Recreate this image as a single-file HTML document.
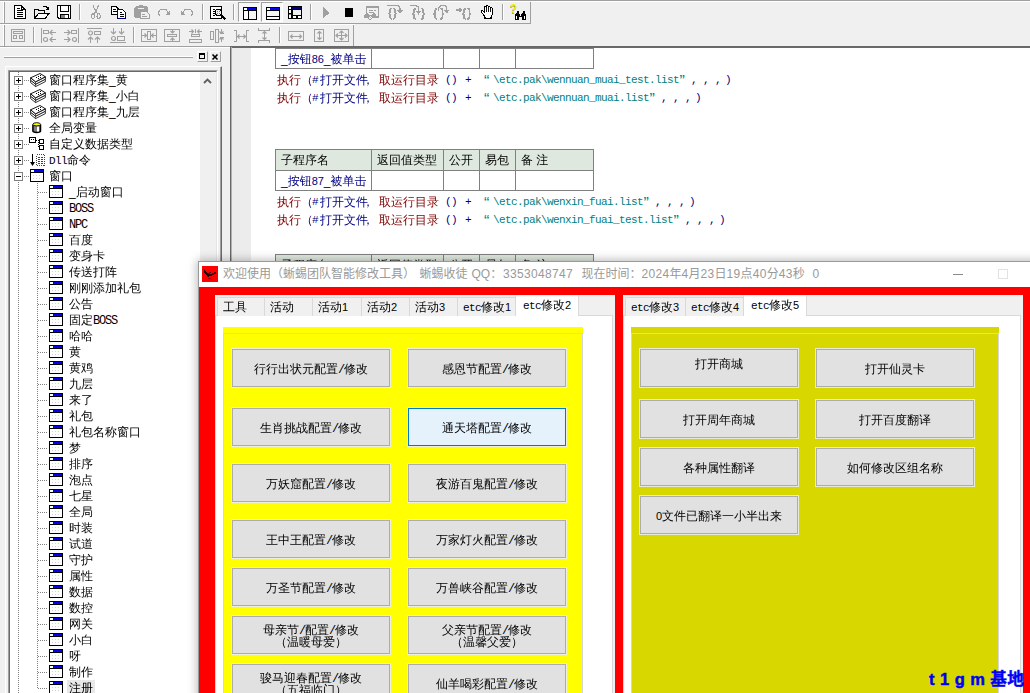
<!DOCTYPE html><html lang="zh"><head><meta charset="utf-8"><title>IDE</title><style>
*{box-sizing:border-box;margin:0;padding:0}
html,body{width:1030px;height:693px;overflow:hidden;background:#f0f0f0}
body{position:relative;font-family:"Liberation Sans","WenQuanYi Zen Hei","Noto Sans CJK SC",sans-serif;font-size:12px;color:#000}
.a{position:absolute}
svg{position:absolute;overflow:visible}
.tree{position:absolute;left:10px;top:72px;width:190px;height:621px;background:#fff;overflow:hidden}
.ti{position:absolute;height:16px;line-height:16px;font-size:12px;white-space:nowrap;letter-spacing:0}
.code{position:absolute;white-space:nowrap;font-size:12px;line-height:14px;height:14px}
.r{color:#800000}.b{color:#000080}.t{color:#008080}
.lat{font-family:"Liberation Mono","WenQuanYi Zen Hei",monospace;font-size:11px;letter-spacing:-0.6px}
.dg{font-family:"Liberation Sans",sans-serif;font-size:11px;letter-spacing:-0.1px}
.lat2{font-family:"Liberation Mono","WenQuanYi Zen Hei",monospace;font-size:12px;letter-spacing:-1.2px}
.cell{position:absolute;border:1px solid #808080;font-size:12px;line-height:21px;white-space:nowrap;overflow:hidden}
.hd{background:#dfe8df}
.btn{position:absolute;width:158px;height:38px;background:#e1e1e1;border:1px solid #adadad;box-shadow:0 0 0 1px rgba(236,236,255,0.85);font-size:12px;text-align:center;white-space:nowrap;line-height:12px}
.btn>span{position:absolute;left:0;right:0;display:block}
.tab{position:absolute;height:19px;top:297px;background:#f0f0f0;border:1px solid #d9d9d9;border-bottom:none;font-size:12px;line-height:18px;white-space:nowrap;padding-left:5px}
.tab.sel{top:295px;height:21px;background:#fff;border-color:#d9d9d9;border-top-color:#f2f2f2;line-height:19px;z-index:3;padding-left:7px}
</style></head><body>
<div class="a" style="left:0;top:0;width:1030px;height:1px;background:#a0a0a0"></div>
<div class="a" style="left:0;top:1px;width:1030px;height:1px;background:#fff"></div>
<div class="a" style="left:0;top:23px;width:531px;height:1px;background:#a0a0a0"></div>
<div class="a" style="left:530px;top:2px;width:1px;height:22px;background:#a0a0a0"></div>
<div class="a" style="left:4px;top:2px;width:1px;height:21px;background:#a0a0a0"></div>
<div class="a" style="left:3px;top:2px;width:1px;height:21px;background:#fff"></div>
<div class="a" style="left:0;top:24px;width:355px;height:1px;background:#fff"></div>
<div class="a" style="left:4px;top:25px;width:1px;height:21px;background:#a0a0a0"></div>
<div class="a" style="left:3px;top:25px;width:1px;height:21px;background:#fff"></div>
<div class="a" style="left:353px;top:25px;width:1px;height:22px;background:#a0a0a0"></div>
<div class="a" style="left:0;top:46px;width:231px;height:1px;background:#a0a0a0"></div>
<div class="a" style="left:0;top:47px;width:231px;height:1px;background:#fff"></div>
<div class="a" style="left:79px;top:4px;width:1px;height:16px;background:#a0a0a0"></div>
<div class="a" style="left:80px;top:4px;width:1px;height:16px;background:#fff"></div>
<div class="a" style="left:202px;top:4px;width:1px;height:16px;background:#a0a0a0"></div>
<div class="a" style="left:203px;top:4px;width:1px;height:16px;background:#fff"></div>
<div class="a" style="left:233px;top:4px;width:1px;height:16px;background:#a0a0a0"></div>
<div class="a" style="left:234px;top:4px;width:1px;height:16px;background:#fff"></div>
<div class="a" style="left:310px;top:4px;width:1px;height:16px;background:#a0a0a0"></div>
<div class="a" style="left:311px;top:4px;width:1px;height:16px;background:#fff"></div>
<div class="a" style="left:502px;top:4px;width:1px;height:16px;background:#a0a0a0"></div>
<div class="a" style="left:503px;top:4px;width:1px;height:16px;background:#fff"></div>
<div class="a" style="left:33px;top:27px;width:1px;height:16px;background:#a0a0a0"></div>
<div class="a" style="left:34px;top:27px;width:1px;height:16px;background:#fff"></div>
<div class="a" style="left:133px;top:27px;width:1px;height:16px;background:#a0a0a0"></div>
<div class="a" style="left:134px;top:27px;width:1px;height:16px;background:#fff"></div>
<div class="a" style="left:279px;top:27px;width:1px;height:16px;background:#a0a0a0"></div>
<div class="a" style="left:280px;top:27px;width:1px;height:16px;background:#fff"></div>
<svg style="left:14px;top:5px" width="13" height="14" viewBox="0 0 13 14" shape-rendering="crispEdges" shape-rendering="geometricPrecision"><path d="M0.6 0.6H7.4L11.6 4.8V13.4H0.6Z" fill="#fff" stroke="#000" stroke-width="1.25"/><path d="M7.4 0.6V4.8H11.6" fill="none" stroke="#000" stroke-width="1.1"/><path d="M3 3.5H6M3 5.5H9M3 7.5H9M3 9.5H9M3 11.5H9" stroke="#000" stroke-width="1" shape-rendering="crispEdges"/></svg>
<svg style="left:34px;top:5px" width="16" height="14" viewBox="0 0 16 14" shape-rendering="crispEdges" shape-rendering="geometricPrecision"><path d="M0.6 13.4V4.6H4L5 5.8H10.4V8" fill="none" stroke="#000" stroke-width="1.25"/><path d="M0.8 13.4L4.6 8.2H15.2L11.2 13.4Z" fill="#fff" stroke="#000" stroke-width="1.25"/><path d="M8.5 2.4C10 0.9 12.6 1.2 13.8 3.4" fill="none" stroke="#000" stroke-width="1"/><path d="M14.8 2V4.8H12Z" fill="#000"/></svg>
<svg style="left:57px;top:5px" width="15" height="14" viewBox="0 0 15 14" shape-rendering="crispEdges" shape-rendering="geometricPrecision"><path d="M0.6 0.6H13.4V13.4H1.8L0.6 12.2Z" fill="#fff" stroke="#000" stroke-width="1.25"/><path d="M3.5 0.6V6.5H11.5V0.6" fill="none" stroke="#000" stroke-width="1.1"/><path d="M3.5 13.4V9.5H11.5V13.4" fill="none" stroke="#000" stroke-width="1.1"/><rect x="4.2" y="10.2" width="3.4" height="2.8" fill="#808080"/><rect x="12" y="1.6" width="0.9" height="0.9" fill="#fff"/></svg>
<svg style="left:91px;top:5px" width="10" height="14" viewBox="0 0 10 14" shape-rendering="crispEdges" shape-rendering="geometricPrecision"><path d="M2.3 0L3 3L6.6 9M7.3 0L6.6 3L3 9" stroke="#a0a0a0" stroke-width="1.1" fill="none"/><ellipse cx="2" cy="11.2" rx="1.6" ry="2.4" fill="none" stroke="#a0a0a0" stroke-width="1.1"/><ellipse cx="7.6" cy="11.2" rx="1.6" ry="2.4" fill="none" stroke="#a0a0a0" stroke-width="1.1"/></svg>
<svg style="left:111px;top:6px" width="16" height="13" viewBox="0 0 16 13" shape-rendering="crispEdges" shape-rendering="geometricPrecision"><path d="M0.6 0.6H5.4L8 3.2V8.6H0.6Z" fill="#fff" stroke="#000" stroke-width="1.25"/><path d="M2.2 3.5H4.8M2.2 5.5H6.5" stroke="#000" shape-rendering="crispEdges"/><path d="M6.7 3.6H11.6L14.6 6.6V12.4H6.7Z" fill="#fff" stroke="#000080" stroke-width="1.35"/><path d="M8.5 6.5H11M8.5 8.5H13M8.5 10.5H13" stroke="#000" shape-rendering="crispEdges"/></svg>
<svg style="left:134px;top:5px" width="16" height="15" viewBox="0 0 16 15" shape-rendering="crispEdges" shape-rendering="geometricPrecision"><rect x="0.3" y="1.2" width="13.6" height="12" rx="2.2" fill="#a0a0a0"/><rect x="4.6" y="0" width="5" height="2.4" rx="1" fill="#a0a0a0"/><rect x="4.2" y="3.1" width="6.2" height="1" fill="#f0f0f0"/><path d="M6.6 6.8H13L15.4 9.2V13.8H6.6Z" fill="#f0f0f0" stroke="#a0a0a0" stroke-width="1.1"/><path d="M8.4 9.5H11M8.4 11.5H13.4" stroke="#a0a0a0" shape-rendering="crispEdges"/></svg>
<svg style="left:158px;top:8px" width="13" height="9" viewBox="0 0 13 9" shape-rendering="crispEdges" shape-rendering="geometricPrecision"><path d="M2.2 7.8Q0.2 6.4 0.7 4Q1.6 1.2 4.6 1.2H6.4Q8.2 1.4 9.4 3.4L10.2 4.6" fill="none" stroke="#a0a0a0" stroke-width="1.3"/><path d="M12.3 1.8V6.9H7.2Z" fill="#a0a0a0"/></svg>
<svg style="left:180px;top:8px" width="13" height="9" viewBox="0 0 13 9" shape-rendering="crispEdges" shape-rendering="geometricPrecision"><path d="M10.8 7.8Q12.8 6.4 12.3 4Q11.4 1.2 8.4 1.2H6.6Q4.8 1.4 3.6 3.4L2.8 4.6" fill="none" stroke="#a0a0a0" stroke-width="1.3"/><path d="M0.7 1.8V6.9H5.8Z" fill="#a0a0a0"/></svg>
<svg style="left:210px;top:6px" width="16" height="14" viewBox="0 0 16 14" shape-rendering="crispEdges" shape-rendering="geometricPrecision"><rect x="0.6" y="0.6" width="10.6" height="11.6" fill="#fff" stroke="#000" stroke-width="1.25"/><path d="M2.5 3.5H5M2.5 5.5H5M2.5 7.5H5M2.5 9.5H5" stroke="#000" shape-rendering="crispEdges"/><circle cx="8.4" cy="6.4" r="3.2" fill="#f0f0f0" stroke="#000" stroke-width="1"/><path d="M7.2 5.5H8.2M9.2 5.5H10M7.2 7.5H8.2M9.2 7.5H10" stroke="#808080" shape-rendering="crispEdges"/><path d="M10.8 9L15 13.3" stroke="#000" stroke-width="2"/></svg>
<div class="a" style="left:238px;top:2px;width:22px;height:20px;background:#f8f8f8;border-left:1px solid #a0a0a0;border-top:1px solid #a0a0a0;border-right:1px solid #fff;border-bottom:1px solid #fff"></div>
<div class="a" style="left:261px;top:2px;width:22px;height:20px;background:#f8f8f8;border-left:1px solid #a0a0a0;border-top:1px solid #a0a0a0;border-right:1px solid #fff;border-bottom:1px solid #fff"></div>
<svg style="left:243px;top:7px" width="14" height="13" viewBox="0 0 14 13" shape-rendering="crispEdges" ><rect x="0.5" y="0.5" width="13" height="12" fill="#fff" stroke="#000"/><rect x="4" y="1" width="9" height="2" fill="#0000ff"/><path d="M1 3.5H13M5.5 4V12" stroke="#000"/><rect x="6" y="4" width="7" height="8" fill="#f6f6f6"/></svg>
<svg style="left:266px;top:7px" width="14" height="13" viewBox="0 0 14 13" shape-rendering="crispEdges" ><rect x="0.5" y="0.5" width="13" height="12" fill="#fff" stroke="#000"/><rect x="4" y="1" width="9" height="2" fill="#0000ff"/><path d="M1 3.5H13M1 9.5H13" stroke="#000"/><rect x="1" y="4" width="12" height="5" fill="#f6f6f6"/></svg>
<svg style="left:288px;top:6px" width="14" height="13" viewBox="0 0 14 13" shape-rendering="crispEdges" ><rect x="0" y="0" width="14" height="13" fill="#000"/><rect x="1" y="1" width="2" height="2" fill="#fff"/><rect x="4" y="1" width="9" height="2" fill="#000080"/><rect x="1" y="4" width="2" height="3" fill="#fff"/><rect x="1" y="9" width="2" height="3" fill="#fff"/><path d="M1 8.5H3" stroke="#808080"/><rect x="5" y="4" width="8" height="5" fill="#f0f0f0"/><rect x="5" y="10" width="3" height="2" fill="#fff"/><rect x="10" y="10" width="3" height="2" fill="#fff"/></svg>
<svg style="left:323px;top:7px" width="7" height="12" viewBox="0 0 7 12" shape-rendering="crispEdges" shape-rendering="geometricPrecision"><path d="M0 0L6.5 5.8L0 11.5Z" fill="#a0a0a0"/></svg>
<svg style="left:345px;top:8px" width="8" height="9" viewBox="0 0 8 9" shape-rendering="crispEdges" ><rect x="0" y="0" width="8" height="9" fill="#000"/></svg>
<svg style="left:364px;top:6px" width="16" height="15" viewBox="0 0 16 15" shape-rendering="crispEdges" shape-rendering="geometricPrecision"><rect x="2.6" y="0.6" width="11.8" height="10.4" fill="#f0f0f0" stroke="#a0a0a0" stroke-width="1.2"/><rect x="2" y="0" width="13" height="2.4" fill="#a0a0a0"/><path d="M5 4.5H9M10 4.5H12M5 6.5H10" stroke="#a0a0a0" shape-rendering="crispEdges"/><path d="M0.2 9.6Q0.2 7.4 2.2 7.4H3.8L5.4 9H7.4L9 7.4H10.4Q12.2 7.4 12.2 9.6V11.6H9.2L6.3 14.4L3.4 11.6H0.2Z" fill="#a0a0a0"/><path d="M6.3 10L8.1 11.8L6.3 13.6L4.5 11.8Z" fill="#f0f0f0"/><path d="M5.6 11.8H7" stroke="#a0a0a0" stroke-width="0.7"/></svg>
<svg style="left:387px;top:5px" width="16" height="14" viewBox="0 0 16 14" shape-rendering="crispEdges" shape-rendering="geometricPrecision"><path d="M5 3.4Q3 3.4 3 5.2V7.0Q3 8.6 1 8.6Q3 8.6 3 10.2V12.0Q3 13.8 5 13.8 M6 3.4Q8 3.4 8 5.2V7.0Q8 8.6 10 8.6Q8 8.6 8 10.2V12.0Q8 13.8 6 13.8" fill="none" stroke="#a0a0a0" stroke-width="1.6"/><path d="M0 0.7H10Q13 0.7 13 3.5V6" fill="none" stroke="#a0a0a0" stroke-width="1.2"/><path d="M10.4 5.4H15.6L13 8.6Z" fill="#a0a0a0"/></svg>
<svg style="left:410px;top:5px" width="16" height="14" viewBox="0 0 16 14" shape-rendering="crispEdges" shape-rendering="geometricPrecision"><path d="M6 3.6Q4 3.6 4 5.4V7.200000000000001Q4 8.8 2 8.8Q4 8.8 4 10.4V12.2Q4 14.0 6 14.0 M11.2 3.6Q13.2 3.6 13.2 5.4V7.200000000000001Q13.2 8.8 15.2 8.8Q13.2 8.8 13.2 10.4V12.2Q13.2 14.0 11.2 14.0" fill="none" stroke="#a0a0a0" stroke-width="1.6"/><path d="M0 0.7H5.5Q8.5 0.7 8.5 3.5V7" fill="none" stroke="#a0a0a0" stroke-width="1.2"/><path d="M5.9 6.2H11.1L8.5 9.6Z" fill="#a0a0a0"/></svg>
<svg style="left:433px;top:5px" width="16" height="14" viewBox="0 0 16 14" shape-rendering="crispEdges" shape-rendering="geometricPrecision"><path d="M4.2 3.6Q2.2 3.6 2.2 5.4V7.200000000000001Q2.2 8.8 0.2 8.8Q2.2 8.8 2.2 10.4V12.2Q2.2 14.0 4.2 14.0 M7.4 3.6Q9.4 3.6 9.4 5.4V7.200000000000001Q9.4 8.8 11.4 8.8Q9.4 8.8 9.4 10.4V12.2Q9.4 14.0 7.4 14.0" fill="none" stroke="#a0a0a0" stroke-width="1.6"/><path d="M5.8 6V3.5Q5.8 0.7 8.6 0.7H10.9Q13.7 0.7 13.7 3.5V6" fill="none" stroke="#a0a0a0" stroke-width="1.2"/><path d="M11.1 5.4H16.3L13.7 8.6Z" fill="#a0a0a0"/></svg>
<svg style="left:456px;top:5px" width="16" height="14" viewBox="0 0 16 14" shape-rendering="crispEdges" shape-rendering="geometricPrecision"><path d="M10 3.6Q8 3.6 8 5.4V7.200000000000001Q8 8.8 6 8.8Q8 8.8 8 10.4V12.2Q8 14.0 10 14.0 M11.4 3.6Q13.4 3.6 13.4 5.4V7.200000000000001Q13.4 8.8 15.4 8.8Q13.4 8.8 13.4 10.4V12.2Q13.4 14.0 11.4 14.0" fill="none" stroke="#a0a0a0" stroke-width="1.6"/><path d="M0 5H5" fill="none" stroke="#a0a0a0" stroke-width="1.2"/><path d="M3.2 2.4L6.4 5L3.2 7.6Z" fill="#a0a0a0"/></svg>
<svg style="left:480px;top:5px" width="14" height="15" viewBox="0 0 14 15" shape-rendering="crispEdges" shape-rendering="geometricPrecision"><path d="M3.5 9.5L1.5 7.5Q0.5 6.5 1.5 6Q2.5 5.5 3.5 6.5L4.5 7.5V2.5Q4.5 1.5 5.5 1.5Q6.3 1.5 6.3 2.5V1.5Q6.3 0.5 7.3 0.5Q8.2 0.5 8.2 1.5V2Q8.2 1.2 9.2 1.2Q10.2 1.2 10.2 2.2V3.5Q10.2 2.8 11.2 2.8Q12.2 2.8 12.2 3.8V9Q12.2 11 11 12.5V13.5H5V12.5Z" fill="#fff" stroke="#000" stroke-width="1.05"/><path d="M6.3 2.5V6.5M8.2 2V6.5M10.2 3.5V6.5" stroke="#000" stroke-width="0.9"/></svg>
<div class="a" style="left:510px;top:3px;font:bold 12px 'Liberation Sans',sans-serif;color:#f4f400;line-height:13px;text-shadow:-0.5px 0.5px 0 #9a9a60">?</div>
<svg style="left:515px;top:11px" width="11" height="9" viewBox="0 0 11 9" shape-rendering="crispEdges" shape-rendering="geometricPrecision"><path d="M0 9V4L1.5 2V0H3.5V2L4.6 3.5H6.4L7.5 2V0H9.5V2L11 4V9H6.8V5.5H4.2V9Z" fill="#000"/><rect x="1.2" y="5" width="1" height="2.6" fill="#fff"/><rect x="8.8" y="5" width="1" height="2.6" fill="#fff"/><rect x="5" y="4.2" width="1" height="1" fill="#fff"/></svg>
<svg style="left:11px;top:29px" width="14" height="13" viewBox="0 0 14 13" shape-rendering="crispEdges" ><g fill="none" stroke="#a0a0a0" stroke-width="1"><rect x="0.5" y="0.5" width="13" height="12"/><rect x="2.5" y="2.5" width="9" height="2"/><rect x="2.5" y="6.5" width="3" height="3"/><rect x="8.5" y="6.5" width="3" height="3"/></g></svg>
<svg style="left:41px;top:28px" width="16" height="15" viewBox="0 0 16 15" shape-rendering="crispEdges" ><g fill="none" stroke="#a0a0a0" stroke-width="1"><path d="M0.5 0V15"/><rect x="2.5" y="2.5" width="5" height="3"/><circle cx="4.5" cy="11.5" r="2" shape-rendering="geometricPrecision" stroke-width="1.2"/><path d="M9 4.5H15M9 11.5H15"/><path d="M11.5 2L9 4.5L11.5 7M11.5 9L9 11.5L11.5 14" shape-rendering="geometricPrecision" stroke-width="1.2"/></g></svg>
<svg style="left:64px;top:28px" width="16" height="15" viewBox="0 0 16 15" shape-rendering="crispEdges" ><g fill="none" stroke="#a0a0a0" stroke-width="1"><path d="M14.5 0V15"/><rect x="7.5" y="2.5" width="5" height="3"/><circle cx="10.5" cy="11.5" r="2" shape-rendering="geometricPrecision" stroke-width="1.2"/><path d="M0 4.5H6M0 11.5H6"/><path d="M3.5 2L6 4.5L3.5 7M3.5 9L6 11.5L3.5 14" shape-rendering="geometricPrecision" stroke-width="1.2"/></g></svg>
<svg style="left:87px;top:28px" width="16" height="15" viewBox="0 0 16 15" shape-rendering="crispEdges" ><g fill="none" stroke="#a0a0a0" stroke-width="1"><path d="M0 0.5H15"/><circle cx="3.5" cy="5" r="2" shape-rendering="geometricPrecision" stroke-width="1.2"/><rect x="7.5" y="3.5" width="6" height="3"/><path d="M3.5 9V15M10.5 9V15"/><path d="M1 11.5L3.5 9L6 11.5M8 11.5L10.5 9L13 11.5" shape-rendering="geometricPrecision" stroke-width="1.2"/></g></svg>
<svg style="left:110px;top:28px" width="16" height="15" viewBox="0 0 16 15" shape-rendering="crispEdges" ><g fill="none" stroke="#a0a0a0" stroke-width="1"><path d="M0 14.5H16"/><circle cx="3.5" cy="10.5" r="2" shape-rendering="geometricPrecision" stroke-width="1.2"/><rect x="7.5" y="8.5" width="7" height="4"/><path d="M3.5 0V6M11.5 0V6"/><path d="M1 3.5L3.5 6L6 3.5M9 3.5L11.5 6L14 3.5" shape-rendering="geometricPrecision" stroke-width="1.2"/></g></svg>
<svg style="left:141px;top:29px" width="16" height="13" viewBox="0 0 16 13" shape-rendering="crispEdges" ><g fill="none" stroke="#a0a0a0" stroke-width="1"><rect x="0.5" y="0.5" width="15" height="12"/><rect x="6.5" y="2.5" width="3" height="8"/><path d="M1 6.5H5M11 6.5H15"/><path d="M3.5 4.5L5.5 6.5L3.5 8.5M12.5 4.5L10.5 6.5L12.5 8.5" shape-rendering="geometricPrecision" stroke-width="1.2"/></g></svg>
<svg style="left:164px;top:29px" width="16" height="13" viewBox="0 0 16 13" shape-rendering="crispEdges" ><g fill="none" stroke="#a0a0a0" stroke-width="1"><rect x="0.5" y="0.5" width="15" height="12"/><rect x="3.5" y="5.5" width="9" height="2"/><path d="M8.5 1V4M8.5 9V12"/><path d="M6.5 2L8.5 4L10.5 2M6.5 11L8.5 9L10.5 11" shape-rendering="geometricPrecision" stroke-width="1.2"/></g></svg>
<svg style="left:189px;top:29px" width="14" height="14" viewBox="0 0 14 14" shape-rendering="crispEdges" ><g fill="none" stroke="#a0a0a0" stroke-width="1"><path d="M0 2.5H4M9 2.5H13"/><path d="M2.5 0.5L4.5 2.5L2.5 4.5M10.5 0.5L8.5 2.5L10.5 4.5" shape-rendering="geometricPrecision" stroke-width="1.2"/><path d="M6.5 0V4"/><rect x="2.5" y="5.5" width="8" height="2"/><rect x="0.5" y="10.5" width="12" height="3"/></g></svg>
<svg style="left:210px;top:29px" width="15" height="14" viewBox="0 0 15 14" shape-rendering="crispEdges" ><g fill="none" stroke="#a0a0a0" stroke-width="1"><rect x="0.5" y="2.5" width="3" height="8"/><rect x="5.5" y="0.5" width="3" height="13"/><path d="M11.5 0V5M11.5 8V13M9.5 4.5H14M9.5 8.5H14"/><path d="M9.5 2.5L11.5 4.5L13.5 2.5M9.5 10.5L11.5 8.5L13.5 10.5" shape-rendering="geometricPrecision" stroke-width="1.2"/></g></svg>
<svg style="left:234px;top:30px" width="16" height="12" viewBox="0 0 16 12" shape-rendering="crispEdges" ><g fill="none" stroke="#a0a0a0" stroke-width="1"><path d="M0 0.5H2.5V11.5H0M15 0.5H12.5V11.5H15M3.5 6.5H11.5"/><path d="M5.5 4.5L3.5 6.5L5.5 8.5M9.5 4.5L11.5 6.5L9.5 8.5" shape-rendering="geometricPrecision" stroke-width="1.2"/></g></svg>
<svg style="left:258px;top:28px" width="13" height="15" viewBox="0 0 13 15" shape-rendering="crispEdges" ><g fill="none" stroke="#a0a0a0" stroke-width="1"><path d="M0.5 0V2.5H11.5V0M0.5 15V12.5H11.5V15M6.5 3.5V11.5"/><path d="M4.5 5.5L6.5 3.5L8.5 5.5M4.5 9.5L6.5 11.5L8.5 9.5" shape-rendering="geometricPrecision" stroke-width="1.2"/></g></svg>
<svg style="left:288px;top:31px" width="16" height="10" viewBox="0 0 16 10" shape-rendering="crispEdges" ><g fill="none" stroke="#a0a0a0" stroke-width="1"><rect x="0.5" y="0.5" width="15" height="9"/><path d="M2.5 5.5H13.5"/><path d="M4.5 3.5L2.5 5.5L4.5 7.5M11.5 3.5L13.5 5.5L11.5 7.5" shape-rendering="geometricPrecision" stroke-width="1.2"/></g></svg>
<svg style="left:314px;top:29px" width="10" height="13" viewBox="0 0 10 13" shape-rendering="crispEdges" ><g fill="none" stroke="#a0a0a0" stroke-width="1"><rect x="0.5" y="0.5" width="9" height="12"/><path d="M5.5 2.5V10.5"/><path d="M3.5 4.5L5.5 2.5L7.5 4.5M3.5 8.5L5.5 10.5L7.5 8.5" shape-rendering="geometricPrecision" stroke-width="1.2"/></g></svg>
<svg style="left:334px;top:29px" width="15" height="13" viewBox="0 0 15 13" shape-rendering="crispEdges" ><g fill="none" stroke="#a0a0a0" stroke-width="1"><rect x="0.5" y="0.5" width="14" height="12"/><path d="M2 6.5H13M7.5 2V11"/><path d="M5.5 4L7.5 2L9.5 4M5.5 9L7.5 11L9.5 9M4 4.5L2 6.5L4 8.5M11 4.5L13 6.5L11 8.5" shape-rendering="geometricPrecision" stroke-width="1.2"/></g></svg>
<div class="a" style="left:4px;top:56px;width:189px;height:1px;background:#fff"></div>
<div class="a" style="left:4px;top:57px;width:189px;height:1px;background:#a0a0a0"></div>
<div class="a" style="left:197px;top:51px;width:11px;height:11px;background:#f0f0f0;border-right:1px solid #a0a0a0;border-bottom:1px solid #a0a0a0;border-top:1px solid #fff;border-left:1px solid #fff"></div>
<div class="a" style="left:210px;top:51px;width:11px;height:11px;background:#f0f0f0;border-right:1px solid #a0a0a0;border-bottom:1px solid #a0a0a0;border-top:1px solid #fff;border-left:1px solid #fff"></div>
<svg style="left:199px;top:53px" width="7" height="7" viewBox="0 0 7 7" shape-rendering="crispEdges" ><rect x="0.5" y="1" width="5" height="4.5" fill="none" stroke="#000" stroke-width="1"/><rect x="0" y="0" width="6" height="2" fill="#000"/></svg>
<svg style="left:212px;top:54px" width="7" height="6" viewBox="0 0 7 6" shape-rendering="crispEdges" ><path d="M0.5 0.5L5.5 5.5M5.5 0.5L0.5 5.5" stroke="#000" stroke-width="1.6" shape-rendering="auto"/></svg>
<div class="a" style="left:5px;top:66px;width:217px;height:640px;border-left:1px solid #fff;border-top:1px solid #fff;border-right:1px solid #696969"></div>
<div class="a" style="left:6px;top:67px;width:215px;height:640px;border-right:1px solid #a0a0a0"></div>
<div class="a" style="left:8px;top:70px;width:210px;height:640px;border-left:1px solid #a0a0a0;border-top:1px solid #a0a0a0;border-right:1px solid #fff"></div>
<div class="a" style="left:9px;top:71px;width:208px;height:640px;border-left:1px solid #696969;border-top:1px solid #696969;border-right:1px solid #e3e3e3;background:#fff"></div>
<div class="a" style="left:200px;top:72px;width:16px;height:640px;background:#f0f0f0"></div>
<svg style="left:203px;top:78px" width="9" height="6" viewBox="0 0 9 6" shape-rendering="crispEdges" ><path d="M1 5L4.5 1.5L8 5" fill="none" stroke="#606060" stroke-width="1.8" shape-rendering="auto"/></svg>
<div class="a" style="left:223px;top:48px;width:7px;height:660px;background:#f0f0f0"></div>
<div class="tree">
<div class="a" style="left:8px;top:0px;width:1px;height:640px;background:repeating-linear-gradient(180deg,#808080 0 1px,transparent 1px 2px)"></div>
<div class="a" style="left:4px;top:4px;width:9px;height:9px;border:1px solid #808080;background:#fff"></div>
<div class="a" style="left:6px;top:8px;width:5px;height:1px;background:#000"></div>
<div class="a" style="left:8px;top:6px;width:1px;height:5px;background:#000"></div>
<div class="a" style="left:14px;top:8px;width:6px;height:1px;background:repeating-linear-gradient(90deg,#808080 0 1px,transparent 1px 2px)"></div>
<svg style="left:20px;top:1px" width="16" height="14" viewBox="0 0 16 14" shape-rendering="geometricPrecision"><path d="M0.6 9.6L5.6 13.6L15.4 8.6V6.2L5.6 11.2L0.6 7.2Z" fill="#fff" stroke="#000" stroke-width="0.8"/><path d="M0.6 7.2L5.6 11.2L15.4 6.2V3.8L5.6 8.8L0.6 4.8Z" fill="#fff" stroke="#000" stroke-width="0.8"/><path d="M0.6 4.8L10 0.5L15.4 3.8L5.6 8.8Z" fill="#fff" stroke="#000" stroke-width="0.9"/><path d="M5.6 8.8V13.6" stroke="#000" stroke-width="0.6"/><rect x="6" y="4" width="1" height="1" fill="#000"/><rect x="8" y="3" width="1" height="1" fill="#000"/><rect x="10" y="2" width="1" height="1" fill="#000"/><rect x="8" y="5" width="1" height="1" fill="#000"/><rect x="10" y="4" width="1" height="1" fill="#000"/></svg>
<div class="ti" style="left:39px;top:0px">窗口程序集_黄</div>
<div class="a" style="left:4px;top:20px;width:9px;height:9px;border:1px solid #808080;background:#fff"></div>
<div class="a" style="left:6px;top:24px;width:5px;height:1px;background:#000"></div>
<div class="a" style="left:8px;top:22px;width:1px;height:5px;background:#000"></div>
<div class="a" style="left:14px;top:24px;width:6px;height:1px;background:repeating-linear-gradient(90deg,#808080 0 1px,transparent 1px 2px)"></div>
<svg style="left:20px;top:17px" width="16" height="14" viewBox="0 0 16 14" shape-rendering="geometricPrecision"><path d="M0.6 9.6L5.6 13.6L15.4 8.6V6.2L5.6 11.2L0.6 7.2Z" fill="#fff" stroke="#000" stroke-width="0.8"/><path d="M0.6 7.2L5.6 11.2L15.4 6.2V3.8L5.6 8.8L0.6 4.8Z" fill="#fff" stroke="#000" stroke-width="0.8"/><path d="M0.6 4.8L10 0.5L15.4 3.8L5.6 8.8Z" fill="#fff" stroke="#000" stroke-width="0.9"/><path d="M5.6 8.8V13.6" stroke="#000" stroke-width="0.6"/><rect x="6" y="4" width="1" height="1" fill="#000"/><rect x="8" y="3" width="1" height="1" fill="#000"/><rect x="10" y="2" width="1" height="1" fill="#000"/><rect x="8" y="5" width="1" height="1" fill="#000"/><rect x="10" y="4" width="1" height="1" fill="#000"/></svg>
<div class="ti" style="left:39px;top:16px">窗口程序集_小白</div>
<div class="a" style="left:4px;top:36px;width:9px;height:9px;border:1px solid #808080;background:#fff"></div>
<div class="a" style="left:6px;top:40px;width:5px;height:1px;background:#000"></div>
<div class="a" style="left:8px;top:38px;width:1px;height:5px;background:#000"></div>
<div class="a" style="left:14px;top:40px;width:6px;height:1px;background:repeating-linear-gradient(90deg,#808080 0 1px,transparent 1px 2px)"></div>
<svg style="left:20px;top:33px" width="16" height="14" viewBox="0 0 16 14" shape-rendering="geometricPrecision"><path d="M0.6 9.6L5.6 13.6L15.4 8.6V6.2L5.6 11.2L0.6 7.2Z" fill="#fff" stroke="#000" stroke-width="0.8"/><path d="M0.6 7.2L5.6 11.2L15.4 6.2V3.8L5.6 8.8L0.6 4.8Z" fill="#fff" stroke="#000" stroke-width="0.8"/><path d="M0.6 4.8L10 0.5L15.4 3.8L5.6 8.8Z" fill="#fff" stroke="#000" stroke-width="0.9"/><path d="M5.6 8.8V13.6" stroke="#000" stroke-width="0.6"/><rect x="6" y="4" width="1" height="1" fill="#000"/><rect x="8" y="3" width="1" height="1" fill="#000"/><rect x="10" y="2" width="1" height="1" fill="#000"/><rect x="8" y="5" width="1" height="1" fill="#000"/><rect x="10" y="4" width="1" height="1" fill="#000"/></svg>
<div class="ti" style="left:39px;top:32px">窗口程序集_九层</div>
<div class="a" style="left:4px;top:52px;width:9px;height:9px;border:1px solid #808080;background:#fff"></div>
<div class="a" style="left:6px;top:56px;width:5px;height:1px;background:#000"></div>
<div class="a" style="left:8px;top:54px;width:1px;height:5px;background:#000"></div>
<div class="a" style="left:14px;top:56px;width:6px;height:1px;background:repeating-linear-gradient(90deg,#808080 0 1px,transparent 1px 2px)"></div>
<svg style="left:22px;top:50px" width="10" height="12" viewBox="0 0 10 12" shape-rendering="geometricPrecision"><path d="M0.9 2.4V9Q0.9 10.4 4.7 10.4Q8.5 10.4 8.5 9V2.4" fill="#808080" stroke="#000" stroke-width="1.5"/><rect x="5" y="4.5" width="2" height="5" fill="#fff"/><ellipse cx="4.7" cy="2.3" rx="3.8" ry="1.6" fill="#ffff00" stroke="#000" stroke-width="0.9"/></svg>
<div class="ti" style="left:39px;top:48px">全局变量</div>
<div class="a" style="left:4px;top:68px;width:9px;height:9px;border:1px solid #808080;background:#fff"></div>
<div class="a" style="left:6px;top:72px;width:5px;height:1px;background:#000"></div>
<div class="a" style="left:8px;top:70px;width:1px;height:5px;background:#000"></div>
<div class="a" style="left:14px;top:72px;width:6px;height:1px;background:repeating-linear-gradient(90deg,#808080 0 1px,transparent 1px 2px)"></div>
<svg style="left:19px;top:64px" width="16" height="15" viewBox="0 0 16 15" shape-rendering="crispEdges"><rect x="0.5" y="1.5" width="6" height="5" fill="#fff" stroke="#000"/><path d="M2 3.5H3M4 3.5H5" stroke="#000"/><path d="M7 4.5H9.5V11.5" fill="none" stroke="#000" stroke-dasharray="1 1"/><rect x="10.5" y="3.5" width="4" height="4" fill="#fff" stroke="#000" rx="1"/><rect x="10.5" y="9.5" width="4" height="4" fill="#fff" stroke="#000" rx="1"/></svg>
<div class="ti" style="left:39px;top:64px">自定义数据类型</div>
<div class="a" style="left:4px;top:84px;width:9px;height:9px;border:1px solid #808080;background:#fff"></div>
<div class="a" style="left:6px;top:88px;width:5px;height:1px;background:#000"></div>
<div class="a" style="left:8px;top:86px;width:1px;height:5px;background:#000"></div>
<div class="a" style="left:14px;top:88px;width:6px;height:1px;background:repeating-linear-gradient(90deg,#808080 0 1px,transparent 1px 2px)"></div>
<svg style="left:20px;top:81px" width="16" height="14" viewBox="0 0 16 14" shape-rendering="crispEdges"><path d="M2.5 1V12" stroke="#000" stroke-width="1"/><path d="M0 9L2.5 13L5 9Z" fill="#000" shape-rendering="geometricPrecision"/><rect x="6.5" y="1.5" width="8" height="11" fill="none" stroke="#404040" stroke-dasharray="1 1"/><path d="M8 4.5H13M8 6.5H13M8 8.5H13M8 10.5H13" stroke="#404040" stroke-dasharray="2 1"/></svg>
<div class="ti" style="left:39px;top:80px"><span class="lat">Dll</span>命令</div>
<div class="a" style="left:4px;top:100px;width:9px;height:9px;border:1px solid #808080;background:#fff"></div>
<div class="a" style="left:6px;top:104px;width:5px;height:1px;background:#000"></div>
<div class="a" style="left:14px;top:104px;width:6px;height:1px;background:repeating-linear-gradient(90deg,#808080 0 1px,transparent 1px 2px)"></div>
<svg style="left:20px;top:97px" width="14" height="13" viewBox="0 0 14 13" shape-rendering="crispEdges"><rect x="0.5" y="0.5" width="13" height="12" fill="#fff" stroke="#000"/><rect x="4" y="1" width="9" height="2" fill="#0000ff"/><path d="M1 3.5H13" stroke="#000" stroke-width="1"/><rect x="1" y="1" width="2" height="2" fill="#fff"/><path d="M3 6.5H11M3 9.5H11" stroke="#d0d0d0" stroke-dasharray="1 2"/></svg>
<div class="ti" style="left:39px;top:96px">窗口</div>
<div class="a" style="left:27px;top:111px;width:1px;height:505px;background:repeating-linear-gradient(180deg,#808080 0 1px,transparent 1px 2px)"></div>
<div class="a" style="left:28px;top:120px;width:10px;height:1px;background:repeating-linear-gradient(90deg,#808080 0 1px,transparent 1px 2px)"></div>
<svg style="left:39px;top:113px" width="14" height="13" viewBox="0 0 14 13" shape-rendering="crispEdges"><rect x="0.5" y="0.5" width="13" height="12" fill="#fff" stroke="#000"/><rect x="4" y="1" width="9" height="2" fill="#0000ff"/><path d="M1 3.5H13" stroke="#000" stroke-width="1"/><rect x="1" y="1" width="2" height="2" fill="#fff"/><path d="M3 6.5H11M3 9.5H11" stroke="#d0d0d0" stroke-dasharray="1 2"/></svg>
<div class="ti" style="left:59px;top:112px;">_启动窗口</div>
<div class="a" style="left:28px;top:136px;width:10px;height:1px;background:repeating-linear-gradient(90deg,#808080 0 1px,transparent 1px 2px)"></div>
<svg style="left:39px;top:129px" width="14" height="13" viewBox="0 0 14 13" shape-rendering="crispEdges"><rect x="0.5" y="0.5" width="13" height="12" fill="#fff" stroke="#000"/><rect x="4" y="1" width="9" height="2" fill="#0000ff"/><path d="M1 3.5H13" stroke="#000" stroke-width="1"/><rect x="1" y="1" width="2" height="2" fill="#fff"/><path d="M3 6.5H11M3 9.5H11" stroke="#d0d0d0" stroke-dasharray="1 2"/></svg>
<div class="ti" style="left:59px;top:128px;"><span class="lat2">BOSS</span></div>
<div class="a" style="left:28px;top:152px;width:10px;height:1px;background:repeating-linear-gradient(90deg,#808080 0 1px,transparent 1px 2px)"></div>
<svg style="left:39px;top:145px" width="14" height="13" viewBox="0 0 14 13" shape-rendering="crispEdges"><rect x="0.5" y="0.5" width="13" height="12" fill="#fff" stroke="#000"/><rect x="4" y="1" width="9" height="2" fill="#0000ff"/><path d="M1 3.5H13" stroke="#000" stroke-width="1"/><rect x="1" y="1" width="2" height="2" fill="#fff"/><path d="M3 6.5H11M3 9.5H11" stroke="#d0d0d0" stroke-dasharray="1 2"/></svg>
<div class="ti" style="left:59px;top:144px;"><span class="lat2">NPC</span></div>
<div class="a" style="left:28px;top:168px;width:10px;height:1px;background:repeating-linear-gradient(90deg,#808080 0 1px,transparent 1px 2px)"></div>
<svg style="left:39px;top:161px" width="14" height="13" viewBox="0 0 14 13" shape-rendering="crispEdges"><rect x="0.5" y="0.5" width="13" height="12" fill="#fff" stroke="#000"/><rect x="4" y="1" width="9" height="2" fill="#0000ff"/><path d="M1 3.5H13" stroke="#000" stroke-width="1"/><rect x="1" y="1" width="2" height="2" fill="#fff"/><path d="M3 6.5H11M3 9.5H11" stroke="#d0d0d0" stroke-dasharray="1 2"/></svg>
<div class="ti" style="left:59px;top:160px;">百度</div>
<div class="a" style="left:28px;top:184px;width:10px;height:1px;background:repeating-linear-gradient(90deg,#808080 0 1px,transparent 1px 2px)"></div>
<svg style="left:39px;top:177px" width="14" height="13" viewBox="0 0 14 13" shape-rendering="crispEdges"><rect x="0.5" y="0.5" width="13" height="12" fill="#fff" stroke="#000"/><rect x="4" y="1" width="9" height="2" fill="#0000ff"/><path d="M1 3.5H13" stroke="#000" stroke-width="1"/><rect x="1" y="1" width="2" height="2" fill="#fff"/><path d="M3 6.5H11M3 9.5H11" stroke="#d0d0d0" stroke-dasharray="1 2"/></svg>
<div class="ti" style="left:59px;top:176px;">变身卡</div>
<div class="a" style="left:28px;top:200px;width:10px;height:1px;background:repeating-linear-gradient(90deg,#808080 0 1px,transparent 1px 2px)"></div>
<svg style="left:39px;top:193px" width="14" height="13" viewBox="0 0 14 13" shape-rendering="crispEdges"><rect x="0.5" y="0.5" width="13" height="12" fill="#fff" stroke="#000"/><rect x="4" y="1" width="9" height="2" fill="#0000ff"/><path d="M1 3.5H13" stroke="#000" stroke-width="1"/><rect x="1" y="1" width="2" height="2" fill="#fff"/><path d="M3 6.5H11M3 9.5H11" stroke="#d0d0d0" stroke-dasharray="1 2"/></svg>
<div class="ti" style="left:59px;top:192px;">传送打阵</div>
<div class="a" style="left:28px;top:216px;width:10px;height:1px;background:repeating-linear-gradient(90deg,#808080 0 1px,transparent 1px 2px)"></div>
<svg style="left:39px;top:209px" width="14" height="13" viewBox="0 0 14 13" shape-rendering="crispEdges"><rect x="0.5" y="0.5" width="13" height="12" fill="#fff" stroke="#000"/><rect x="4" y="1" width="9" height="2" fill="#0000ff"/><path d="M1 3.5H13" stroke="#000" stroke-width="1"/><rect x="1" y="1" width="2" height="2" fill="#fff"/><path d="M3 6.5H11M3 9.5H11" stroke="#d0d0d0" stroke-dasharray="1 2"/></svg>
<div class="ti" style="left:59px;top:208px;">刚刚添加礼包</div>
<div class="a" style="left:28px;top:232px;width:10px;height:1px;background:repeating-linear-gradient(90deg,#808080 0 1px,transparent 1px 2px)"></div>
<svg style="left:39px;top:225px" width="14" height="13" viewBox="0 0 14 13" shape-rendering="crispEdges"><rect x="0.5" y="0.5" width="13" height="12" fill="#fff" stroke="#000"/><rect x="4" y="1" width="9" height="2" fill="#0000ff"/><path d="M1 3.5H13" stroke="#000" stroke-width="1"/><rect x="1" y="1" width="2" height="2" fill="#fff"/><path d="M3 6.5H11M3 9.5H11" stroke="#d0d0d0" stroke-dasharray="1 2"/></svg>
<div class="ti" style="left:59px;top:224px;">公告</div>
<div class="a" style="left:28px;top:248px;width:10px;height:1px;background:repeating-linear-gradient(90deg,#808080 0 1px,transparent 1px 2px)"></div>
<svg style="left:39px;top:241px" width="14" height="13" viewBox="0 0 14 13" shape-rendering="crispEdges"><rect x="0.5" y="0.5" width="13" height="12" fill="#fff" stroke="#000"/><rect x="4" y="1" width="9" height="2" fill="#0000ff"/><path d="M1 3.5H13" stroke="#000" stroke-width="1"/><rect x="1" y="1" width="2" height="2" fill="#fff"/><path d="M3 6.5H11M3 9.5H11" stroke="#d0d0d0" stroke-dasharray="1 2"/></svg>
<div class="ti" style="left:59px;top:240px;">固定<span class="lat2">BOSS</span></div>
<div class="a" style="left:28px;top:264px;width:10px;height:1px;background:repeating-linear-gradient(90deg,#808080 0 1px,transparent 1px 2px)"></div>
<svg style="left:39px;top:257px" width="14" height="13" viewBox="0 0 14 13" shape-rendering="crispEdges"><rect x="0.5" y="0.5" width="13" height="12" fill="#fff" stroke="#000"/><rect x="4" y="1" width="9" height="2" fill="#0000ff"/><path d="M1 3.5H13" stroke="#000" stroke-width="1"/><rect x="1" y="1" width="2" height="2" fill="#fff"/><path d="M3 6.5H11M3 9.5H11" stroke="#d0d0d0" stroke-dasharray="1 2"/></svg>
<div class="ti" style="left:59px;top:256px;">哈哈</div>
<div class="a" style="left:28px;top:280px;width:10px;height:1px;background:repeating-linear-gradient(90deg,#808080 0 1px,transparent 1px 2px)"></div>
<svg style="left:39px;top:273px" width="14" height="13" viewBox="0 0 14 13" shape-rendering="crispEdges"><rect x="0.5" y="0.5" width="13" height="12" fill="#fff" stroke="#000"/><rect x="4" y="1" width="9" height="2" fill="#0000ff"/><path d="M1 3.5H13" stroke="#000" stroke-width="1"/><rect x="1" y="1" width="2" height="2" fill="#fff"/><path d="M3 6.5H11M3 9.5H11" stroke="#d0d0d0" stroke-dasharray="1 2"/></svg>
<div class="ti" style="left:59px;top:272px;">黄</div>
<div class="a" style="left:28px;top:296px;width:10px;height:1px;background:repeating-linear-gradient(90deg,#808080 0 1px,transparent 1px 2px)"></div>
<svg style="left:39px;top:289px" width="14" height="13" viewBox="0 0 14 13" shape-rendering="crispEdges"><rect x="0.5" y="0.5" width="13" height="12" fill="#fff" stroke="#000"/><rect x="4" y="1" width="9" height="2" fill="#0000ff"/><path d="M1 3.5H13" stroke="#000" stroke-width="1"/><rect x="1" y="1" width="2" height="2" fill="#fff"/><path d="M3 6.5H11M3 9.5H11" stroke="#d0d0d0" stroke-dasharray="1 2"/></svg>
<div class="ti" style="left:59px;top:288px;">黄鸡</div>
<div class="a" style="left:28px;top:312px;width:10px;height:1px;background:repeating-linear-gradient(90deg,#808080 0 1px,transparent 1px 2px)"></div>
<svg style="left:39px;top:305px" width="14" height="13" viewBox="0 0 14 13" shape-rendering="crispEdges"><rect x="0.5" y="0.5" width="13" height="12" fill="#fff" stroke="#000"/><rect x="4" y="1" width="9" height="2" fill="#0000ff"/><path d="M1 3.5H13" stroke="#000" stroke-width="1"/><rect x="1" y="1" width="2" height="2" fill="#fff"/><path d="M3 6.5H11M3 9.5H11" stroke="#d0d0d0" stroke-dasharray="1 2"/></svg>
<div class="ti" style="left:59px;top:304px;">九层</div>
<div class="a" style="left:28px;top:328px;width:10px;height:1px;background:repeating-linear-gradient(90deg,#808080 0 1px,transparent 1px 2px)"></div>
<svg style="left:39px;top:321px" width="14" height="13" viewBox="0 0 14 13" shape-rendering="crispEdges"><rect x="0.5" y="0.5" width="13" height="12" fill="#fff" stroke="#000"/><rect x="4" y="1" width="9" height="2" fill="#0000ff"/><path d="M1 3.5H13" stroke="#000" stroke-width="1"/><rect x="1" y="1" width="2" height="2" fill="#fff"/><path d="M3 6.5H11M3 9.5H11" stroke="#d0d0d0" stroke-dasharray="1 2"/></svg>
<div class="ti" style="left:59px;top:320px;">来了</div>
<div class="a" style="left:28px;top:344px;width:10px;height:1px;background:repeating-linear-gradient(90deg,#808080 0 1px,transparent 1px 2px)"></div>
<svg style="left:39px;top:337px" width="14" height="13" viewBox="0 0 14 13" shape-rendering="crispEdges"><rect x="0.5" y="0.5" width="13" height="12" fill="#fff" stroke="#000"/><rect x="4" y="1" width="9" height="2" fill="#0000ff"/><path d="M1 3.5H13" stroke="#000" stroke-width="1"/><rect x="1" y="1" width="2" height="2" fill="#fff"/><path d="M3 6.5H11M3 9.5H11" stroke="#d0d0d0" stroke-dasharray="1 2"/></svg>
<div class="ti" style="left:59px;top:336px;">礼包</div>
<div class="a" style="left:28px;top:360px;width:10px;height:1px;background:repeating-linear-gradient(90deg,#808080 0 1px,transparent 1px 2px)"></div>
<svg style="left:39px;top:353px" width="14" height="13" viewBox="0 0 14 13" shape-rendering="crispEdges"><rect x="0.5" y="0.5" width="13" height="12" fill="#fff" stroke="#000"/><rect x="4" y="1" width="9" height="2" fill="#0000ff"/><path d="M1 3.5H13" stroke="#000" stroke-width="1"/><rect x="1" y="1" width="2" height="2" fill="#fff"/><path d="M3 6.5H11M3 9.5H11" stroke="#d0d0d0" stroke-dasharray="1 2"/></svg>
<div class="ti" style="left:59px;top:352px;">礼包名称窗口</div>
<div class="a" style="left:28px;top:376px;width:10px;height:1px;background:repeating-linear-gradient(90deg,#808080 0 1px,transparent 1px 2px)"></div>
<svg style="left:39px;top:369px" width="14" height="13" viewBox="0 0 14 13" shape-rendering="crispEdges"><rect x="0.5" y="0.5" width="13" height="12" fill="#fff" stroke="#000"/><rect x="4" y="1" width="9" height="2" fill="#0000ff"/><path d="M1 3.5H13" stroke="#000" stroke-width="1"/><rect x="1" y="1" width="2" height="2" fill="#fff"/><path d="M3 6.5H11M3 9.5H11" stroke="#d0d0d0" stroke-dasharray="1 2"/></svg>
<div class="ti" style="left:59px;top:368px;">梦</div>
<div class="a" style="left:28px;top:392px;width:10px;height:1px;background:repeating-linear-gradient(90deg,#808080 0 1px,transparent 1px 2px)"></div>
<svg style="left:39px;top:385px" width="14" height="13" viewBox="0 0 14 13" shape-rendering="crispEdges"><rect x="0.5" y="0.5" width="13" height="12" fill="#fff" stroke="#000"/><rect x="4" y="1" width="9" height="2" fill="#0000ff"/><path d="M1 3.5H13" stroke="#000" stroke-width="1"/><rect x="1" y="1" width="2" height="2" fill="#fff"/><path d="M3 6.5H11M3 9.5H11" stroke="#d0d0d0" stroke-dasharray="1 2"/></svg>
<div class="ti" style="left:59px;top:384px;">排序</div>
<div class="a" style="left:28px;top:408px;width:10px;height:1px;background:repeating-linear-gradient(90deg,#808080 0 1px,transparent 1px 2px)"></div>
<svg style="left:39px;top:401px" width="14" height="13" viewBox="0 0 14 13" shape-rendering="crispEdges"><rect x="0.5" y="0.5" width="13" height="12" fill="#fff" stroke="#000"/><rect x="4" y="1" width="9" height="2" fill="#0000ff"/><path d="M1 3.5H13" stroke="#000" stroke-width="1"/><rect x="1" y="1" width="2" height="2" fill="#fff"/><path d="M3 6.5H11M3 9.5H11" stroke="#d0d0d0" stroke-dasharray="1 2"/></svg>
<div class="ti" style="left:59px;top:400px;">泡点</div>
<div class="a" style="left:28px;top:424px;width:10px;height:1px;background:repeating-linear-gradient(90deg,#808080 0 1px,transparent 1px 2px)"></div>
<svg style="left:39px;top:417px" width="14" height="13" viewBox="0 0 14 13" shape-rendering="crispEdges"><rect x="0.5" y="0.5" width="13" height="12" fill="#fff" stroke="#000"/><rect x="4" y="1" width="9" height="2" fill="#0000ff"/><path d="M1 3.5H13" stroke="#000" stroke-width="1"/><rect x="1" y="1" width="2" height="2" fill="#fff"/><path d="M3 6.5H11M3 9.5H11" stroke="#d0d0d0" stroke-dasharray="1 2"/></svg>
<div class="ti" style="left:59px;top:416px;">七星</div>
<div class="a" style="left:28px;top:440px;width:10px;height:1px;background:repeating-linear-gradient(90deg,#808080 0 1px,transparent 1px 2px)"></div>
<svg style="left:39px;top:433px" width="14" height="13" viewBox="0 0 14 13" shape-rendering="crispEdges"><rect x="0.5" y="0.5" width="13" height="12" fill="#fff" stroke="#000"/><rect x="4" y="1" width="9" height="2" fill="#0000ff"/><path d="M1 3.5H13" stroke="#000" stroke-width="1"/><rect x="1" y="1" width="2" height="2" fill="#fff"/><path d="M3 6.5H11M3 9.5H11" stroke="#d0d0d0" stroke-dasharray="1 2"/></svg>
<div class="ti" style="left:59px;top:432px;">全局</div>
<div class="a" style="left:28px;top:456px;width:10px;height:1px;background:repeating-linear-gradient(90deg,#808080 0 1px,transparent 1px 2px)"></div>
<svg style="left:39px;top:449px" width="14" height="13" viewBox="0 0 14 13" shape-rendering="crispEdges"><rect x="0.5" y="0.5" width="13" height="12" fill="#fff" stroke="#000"/><rect x="4" y="1" width="9" height="2" fill="#0000ff"/><path d="M1 3.5H13" stroke="#000" stroke-width="1"/><rect x="1" y="1" width="2" height="2" fill="#fff"/><path d="M3 6.5H11M3 9.5H11" stroke="#d0d0d0" stroke-dasharray="1 2"/></svg>
<div class="ti" style="left:59px;top:448px;">时装</div>
<div class="a" style="left:28px;top:472px;width:10px;height:1px;background:repeating-linear-gradient(90deg,#808080 0 1px,transparent 1px 2px)"></div>
<svg style="left:39px;top:465px" width="14" height="13" viewBox="0 0 14 13" shape-rendering="crispEdges"><rect x="0.5" y="0.5" width="13" height="12" fill="#fff" stroke="#000"/><rect x="4" y="1" width="9" height="2" fill="#0000ff"/><path d="M1 3.5H13" stroke="#000" stroke-width="1"/><rect x="1" y="1" width="2" height="2" fill="#fff"/><path d="M3 6.5H11M3 9.5H11" stroke="#d0d0d0" stroke-dasharray="1 2"/></svg>
<div class="ti" style="left:59px;top:464px;">试道</div>
<div class="a" style="left:28px;top:488px;width:10px;height:1px;background:repeating-linear-gradient(90deg,#808080 0 1px,transparent 1px 2px)"></div>
<svg style="left:39px;top:481px" width="14" height="13" viewBox="0 0 14 13" shape-rendering="crispEdges"><rect x="0.5" y="0.5" width="13" height="12" fill="#fff" stroke="#000"/><rect x="4" y="1" width="9" height="2" fill="#0000ff"/><path d="M1 3.5H13" stroke="#000" stroke-width="1"/><rect x="1" y="1" width="2" height="2" fill="#fff"/><path d="M3 6.5H11M3 9.5H11" stroke="#d0d0d0" stroke-dasharray="1 2"/></svg>
<div class="ti" style="left:59px;top:480px;">守护</div>
<div class="a" style="left:28px;top:504px;width:10px;height:1px;background:repeating-linear-gradient(90deg,#808080 0 1px,transparent 1px 2px)"></div>
<svg style="left:39px;top:497px" width="14" height="13" viewBox="0 0 14 13" shape-rendering="crispEdges"><rect x="0.5" y="0.5" width="13" height="12" fill="#fff" stroke="#000"/><rect x="4" y="1" width="9" height="2" fill="#0000ff"/><path d="M1 3.5H13" stroke="#000" stroke-width="1"/><rect x="1" y="1" width="2" height="2" fill="#fff"/><path d="M3 6.5H11M3 9.5H11" stroke="#d0d0d0" stroke-dasharray="1 2"/></svg>
<div class="ti" style="left:59px;top:496px;">属性</div>
<div class="a" style="left:28px;top:520px;width:10px;height:1px;background:repeating-linear-gradient(90deg,#808080 0 1px,transparent 1px 2px)"></div>
<svg style="left:39px;top:513px" width="14" height="13" viewBox="0 0 14 13" shape-rendering="crispEdges"><rect x="0.5" y="0.5" width="13" height="12" fill="#fff" stroke="#000"/><rect x="4" y="1" width="9" height="2" fill="#0000ff"/><path d="M1 3.5H13" stroke="#000" stroke-width="1"/><rect x="1" y="1" width="2" height="2" fill="#fff"/><path d="M3 6.5H11M3 9.5H11" stroke="#d0d0d0" stroke-dasharray="1 2"/></svg>
<div class="ti" style="left:59px;top:512px;">数据</div>
<div class="a" style="left:28px;top:536px;width:10px;height:1px;background:repeating-linear-gradient(90deg,#808080 0 1px,transparent 1px 2px)"></div>
<svg style="left:39px;top:529px" width="14" height="13" viewBox="0 0 14 13" shape-rendering="crispEdges"><rect x="0.5" y="0.5" width="13" height="12" fill="#fff" stroke="#000"/><rect x="4" y="1" width="9" height="2" fill="#0000ff"/><path d="M1 3.5H13" stroke="#000" stroke-width="1"/><rect x="1" y="1" width="2" height="2" fill="#fff"/><path d="M3 6.5H11M3 9.5H11" stroke="#d0d0d0" stroke-dasharray="1 2"/></svg>
<div class="ti" style="left:59px;top:528px;">数控</div>
<div class="a" style="left:28px;top:552px;width:10px;height:1px;background:repeating-linear-gradient(90deg,#808080 0 1px,transparent 1px 2px)"></div>
<svg style="left:39px;top:545px" width="14" height="13" viewBox="0 0 14 13" shape-rendering="crispEdges"><rect x="0.5" y="0.5" width="13" height="12" fill="#fff" stroke="#000"/><rect x="4" y="1" width="9" height="2" fill="#0000ff"/><path d="M1 3.5H13" stroke="#000" stroke-width="1"/><rect x="1" y="1" width="2" height="2" fill="#fff"/><path d="M3 6.5H11M3 9.5H11" stroke="#d0d0d0" stroke-dasharray="1 2"/></svg>
<div class="ti" style="left:59px;top:544px;">网关</div>
<div class="a" style="left:28px;top:568px;width:10px;height:1px;background:repeating-linear-gradient(90deg,#808080 0 1px,transparent 1px 2px)"></div>
<svg style="left:39px;top:561px" width="14" height="13" viewBox="0 0 14 13" shape-rendering="crispEdges"><rect x="0.5" y="0.5" width="13" height="12" fill="#fff" stroke="#000"/><rect x="4" y="1" width="9" height="2" fill="#0000ff"/><path d="M1 3.5H13" stroke="#000" stroke-width="1"/><rect x="1" y="1" width="2" height="2" fill="#fff"/><path d="M3 6.5H11M3 9.5H11" stroke="#d0d0d0" stroke-dasharray="1 2"/></svg>
<div class="ti" style="left:59px;top:560px;">小白</div>
<div class="a" style="left:28px;top:584px;width:10px;height:1px;background:repeating-linear-gradient(90deg,#808080 0 1px,transparent 1px 2px)"></div>
<svg style="left:39px;top:577px" width="14" height="13" viewBox="0 0 14 13" shape-rendering="crispEdges"><rect x="0.5" y="0.5" width="13" height="12" fill="#fff" stroke="#000"/><rect x="4" y="1" width="9" height="2" fill="#0000ff"/><path d="M1 3.5H13" stroke="#000" stroke-width="1"/><rect x="1" y="1" width="2" height="2" fill="#fff"/><path d="M3 6.5H11M3 9.5H11" stroke="#d0d0d0" stroke-dasharray="1 2"/></svg>
<div class="ti" style="left:59px;top:576px;">呀</div>
<div class="a" style="left:28px;top:600px;width:10px;height:1px;background:repeating-linear-gradient(90deg,#808080 0 1px,transparent 1px 2px)"></div>
<svg style="left:39px;top:593px" width="14" height="13" viewBox="0 0 14 13" shape-rendering="crispEdges"><rect x="0.5" y="0.5" width="13" height="12" fill="#fff" stroke="#000"/><rect x="4" y="1" width="9" height="2" fill="#0000ff"/><path d="M1 3.5H13" stroke="#000" stroke-width="1"/><rect x="1" y="1" width="2" height="2" fill="#fff"/><path d="M3 6.5H11M3 9.5H11" stroke="#d0d0d0" stroke-dasharray="1 2"/></svg>
<div class="ti" style="left:59px;top:592px;">制作</div>
<div class="a" style="left:28px;top:616px;width:10px;height:1px;background:repeating-linear-gradient(90deg,#808080 0 1px,transparent 1px 2px)"></div>
<svg style="left:39px;top:609px" width="14" height="13" viewBox="0 0 14 13" shape-rendering="crispEdges"><rect x="0.5" y="0.5" width="13" height="12" fill="#fff" stroke="#000"/><rect x="4" y="1" width="9" height="2" fill="#0000ff"/><path d="M1 3.5H13" stroke="#000" stroke-width="1"/><rect x="1" y="1" width="2" height="2" fill="#fff"/><path d="M3 6.5H11M3 9.5H11" stroke="#d0d0d0" stroke-dasharray="1 2"/></svg>
<div class="ti" style="left:59px;top:608px;background:#e8e8e8;padding:0 2px;margin-left:-2px;">注册</div>
</div>
<div class="a" style="left:230px;top:46px;width:800px;height:2px;background:#696969"></div>
<div class="a" style="left:230px;top:46px;width:1px;height:660px;background:#696969"></div>
<div class="a" style="left:231px;top:47px;width:1px;height:660px;background:#b0b0b0"></div>
<div class="a" style="left:232px;top:48px;width:798px;height:650px;background:#fff"></div>
<div class="a" style="left:232px;top:48px;width:19px;height:650px;background:#ececec"></div>
<div class="cell" style="left:275px;top:48px;width:98px;height:21px;padding-left:5px;background:#fff"><span class="b">_按钮<span class="dg">86</span>_被单击</span></div>
<div class="cell" style="left:371px;top:48px;width:74px;height:21px;padding-left:5px;background:#fff"></div>
<div class="cell" style="left:443px;top:48px;width:38px;height:21px;padding-left:5px;background:#fff"></div>
<div class="cell" style="left:479px;top:48px;width:38px;height:21px;padding-left:5px;background:#fff"></div>
<div class="cell" style="left:515px;top:48px;width:79px;height:21px;padding-left:5px;background:#fff"></div>
<div class="cell hd" style="left:275px;top:149px;width:98px;height:22px;padding-left:5px">子程序名</div>
<div class="cell hd" style="left:371px;top:149px;width:74px;height:22px;padding-left:5px">返回值类型</div>
<div class="cell hd" style="left:443px;top:149px;width:38px;height:22px;padding-left:5px">公开</div>
<div class="cell hd" style="left:479px;top:149px;width:38px;height:22px;padding-left:5px">易包</div>
<div class="cell hd" style="left:515px;top:149px;width:79px;height:22px;padding-left:5px">备 注</div>
<div class="cell" style="left:275px;top:170px;width:98px;height:21px;padding-left:5px;background:#fff"><span class="b">_按钮<span class="dg">87</span>_被单击</span></div>
<div class="cell" style="left:371px;top:170px;width:74px;height:21px;padding-left:5px;background:#fff"></div>
<div class="cell" style="left:443px;top:170px;width:38px;height:21px;padding-left:5px;background:#fff"></div>
<div class="cell" style="left:479px;top:170px;width:38px;height:21px;padding-left:5px;background:#fff"></div>
<div class="cell" style="left:515px;top:170px;width:79px;height:21px;padding-left:5px;background:#fff"></div>
<div class="cell hd" style="left:275px;top:254px;width:98px;height:22px;padding-left:5px">子程序名</div>
<div class="cell hd" style="left:371px;top:254px;width:74px;height:22px;padding-left:5px">返回值类型</div>
<div class="cell hd" style="left:443px;top:254px;width:38px;height:22px;padding-left:5px">公开</div>
<div class="cell hd" style="left:479px;top:254px;width:38px;height:22px;padding-left:5px">易包</div>
<div class="cell hd" style="left:515px;top:254px;width:79px;height:22px;padding-left:5px">备 注</div>
<div class="cell" style="left:275px;top:275px;width:98px;height:21px;padding-left:5px;background:#fff"><span class="b"></span></div>
<div class="cell" style="left:371px;top:275px;width:74px;height:21px;padding-left:5px;background:#fff"></div>
<div class="cell" style="left:443px;top:275px;width:38px;height:21px;padding-left:5px;background:#fff"></div>
<div class="cell" style="left:479px;top:275px;width:38px;height:21px;padding-left:5px;background:#fff"></div>
<div class="cell" style="left:515px;top:275px;width:79px;height:21px;padding-left:5px;background:#fff"></div>
<div class="code r" style="left:277px;top:73px">执行</div>
<div class="code b" style="left:301px;top:73px">（</div>
<div class="code b lat" style="left:312px;top:73px">#</div>
<div class="code b" style="left:320px;top:73px">打开文件</div>
<div class="code b" style="left:362px;top:73px">，</div>
<div class="code r" style="left:379px;top:73px">取运行目录</div>
<div class="code b lat" style="left:445px;top:73px">(</div>
<div class="code b lat" style="left:451px;top:73px">)</div>
<div class="code b lat" style="left:465px;top:73px">+</div>
<div class="code t lat" style="left:493px;top:73px">\etc.pak\wennuan_muai_test.list</div>
<div class="code b lat" style="left:691px;top:73px">,</div>
<div class="code b lat" style="left:703px;top:73px">,</div>
<div class="code b lat" style="left:715px;top:73px">,</div>
<div class="code b lat" style="left:725px;top:73px">)</div>
<div class="code t" style="left:484px;top:75px;font-size:16px">“</div>
<div class="code t" style="left:679.5px;top:75px;font-size:16px">”</div>
<div class="code r" style="left:277px;top:91px">执行</div>
<div class="code b" style="left:301px;top:91px">（</div>
<div class="code b lat" style="left:312px;top:91px">#</div>
<div class="code b" style="left:320px;top:91px">打开文件</div>
<div class="code b" style="left:362px;top:91px">，</div>
<div class="code r" style="left:379px;top:91px">取运行目录</div>
<div class="code b lat" style="left:445px;top:91px">(</div>
<div class="code b lat" style="left:451px;top:91px">)</div>
<div class="code b lat" style="left:465px;top:91px">+</div>
<div class="code t lat" style="left:493px;top:91px">\etc.pak\wennuan_muai.list</div>
<div class="code b lat" style="left:661px;top:91px">,</div>
<div class="code b lat" style="left:673px;top:91px">,</div>
<div class="code b lat" style="left:685px;top:91px">,</div>
<div class="code b lat" style="left:695px;top:91px">)</div>
<div class="code t" style="left:484px;top:93px;font-size:16px">“</div>
<div class="code t" style="left:649.5px;top:93px;font-size:16px">”</div>
<div class="code r" style="left:277px;top:195px">执行</div>
<div class="code b" style="left:301px;top:195px">（</div>
<div class="code b lat" style="left:312px;top:195px">#</div>
<div class="code b" style="left:320px;top:195px">打开文件</div>
<div class="code b" style="left:362px;top:195px">，</div>
<div class="code r" style="left:379px;top:195px">取运行目录</div>
<div class="code b lat" style="left:445px;top:195px">(</div>
<div class="code b lat" style="left:451px;top:195px">)</div>
<div class="code b lat" style="left:465px;top:195px">+</div>
<div class="code t lat" style="left:493px;top:195px">\etc.pak\wenxin_fuai.list</div>
<div class="code b lat" style="left:655px;top:195px">,</div>
<div class="code b lat" style="left:667px;top:195px">,</div>
<div class="code b lat" style="left:679px;top:195px">,</div>
<div class="code b lat" style="left:689px;top:195px">)</div>
<div class="code t" style="left:484px;top:197px;font-size:16px">“</div>
<div class="code t" style="left:643.5px;top:197px;font-size:16px">”</div>
<div class="code r" style="left:277px;top:213px">执行</div>
<div class="code b" style="left:301px;top:213px">（</div>
<div class="code b lat" style="left:312px;top:213px">#</div>
<div class="code b" style="left:320px;top:213px">打开文件</div>
<div class="code b" style="left:362px;top:213px">，</div>
<div class="code r" style="left:379px;top:213px">取运行目录</div>
<div class="code b lat" style="left:445px;top:213px">(</div>
<div class="code b lat" style="left:451px;top:213px">)</div>
<div class="code b lat" style="left:465px;top:213px">+</div>
<div class="code t lat" style="left:493px;top:213px">\etc.pak\wenxin_fuai_test.list</div>
<div class="code b lat" style="left:685px;top:213px">,</div>
<div class="code b lat" style="left:697px;top:213px">,</div>
<div class="code b lat" style="left:709px;top:213px">,</div>
<div class="code b lat" style="left:719px;top:213px">)</div>
<div class="code t" style="left:484px;top:215px;font-size:16px">“</div>
<div class="code t" style="left:673.5px;top:215px;font-size:16px">”</div>
<div class="a" style="left:198px;top:261px;width:840px;height:440px;background:#ff0000;border:1px solid #9a9a9a;box-shadow:0 0 9px 1px rgba(0,0,0,0.28)"></div>
<div class="a" style="left:199px;top:262px;width:831px;height:25px;background:#fff"></div>
<div class="a" style="left:202px;top:266px;width:16px;height:16px;background:#ff0000"></div>
<svg style="left:202px;top:266px" width="16" height="16" viewBox="0 0 16 16" shape-rendering="crispEdges" shape-rendering="geometricPrecision"><defs><filter id="bl" x="-20%" y="-20%" width="140%" height="140%"><feGaussianBlur stdDeviation="0.45"/></filter></defs><g filter="url(#bl)" fill="none" stroke="#1a0000" stroke-linecap="round"><path d="M2.6 5.2L4 7L6.8 9.6" stroke-width="2.2" opacity="0.9"/><path d="M6.2 8.2L8 6.6" stroke-width="1.6" opacity="0.8"/><path d="M7 9.4L10.5 8.2L13.6 7" stroke-width="1.9" opacity="0.8"/><path d="M2.4 3.6L3 5M5.2 11L6.4 9.6M6.6 12.6L9.4 12.8" stroke-width="0.9" opacity="0.45"/></g></svg>
<div style='position:absolute;top:265px;height:18px;line-height:18px;font-size:12px;color:#999;white-space:nowrap;font-family:"Liberation Sans","Noto Sans CJK SC",sans-serif;left:223px'>欢迎使用（蜥蜴团队智能修改工具）</div>
<div style='position:absolute;top:265px;height:18px;line-height:18px;font-size:12px;color:#999;white-space:nowrap;font-family:"Liberation Sans","Noto Sans CJK SC",sans-serif;left:419.5px'>蜥蜴收徒</div>
<div style='position:absolute;top:265px;height:18px;line-height:18px;font-size:12px;color:#999;white-space:nowrap;font-family:"Liberation Sans","Noto Sans CJK SC",sans-serif;left:471.5px'>QQ：</div>
<div style='position:absolute;top:265px;height:18px;line-height:18px;font-size:12px;color:#999;white-space:nowrap;font-family:"Liberation Sans","Noto Sans CJK SC",sans-serif;left:503px'><span style="letter-spacing:0.33px">3353048747</span></div>
<div style='position:absolute;top:265px;height:18px;line-height:18px;font-size:12px;color:#999;white-space:nowrap;font-family:"Liberation Sans","Noto Sans CJK SC",sans-serif;left:581.5px'>现在时间：</div>
<div style='position:absolute;top:265px;height:18px;line-height:18px;font-size:12px;color:#999;white-space:nowrap;font-family:"Liberation Sans","Noto Sans CJK SC",sans-serif;left:641.5px'><span style="letter-spacing:0.33px">2024</span>年<span style="letter-spacing:0.33px">4</span>月<span style="letter-spacing:0.33px">23</span>日<span style="letter-spacing:0.33px">19</span>点<span style="letter-spacing:0.33px">40</span>分<span style="letter-spacing:0.33px">43</span>秒</div>
<div style='position:absolute;top:265px;height:18px;line-height:18px;font-size:12px;color:#999;white-space:nowrap;font-family:"Liberation Sans","Noto Sans CJK SC",sans-serif;left:812.5px'><span style="letter-spacing:0.33px">0</span></div>
<div class="a" style="left:953px;top:274px;width:10px;height:1px;background:#8a8a8a"></div>
<div class="a" style="left:998px;top:269px;width:10px;height:10px;border:1px solid #e2e2e2"></div>
<div class="a" style="left:215px;top:295px;width:400px;height:410px;background:#f0f0f0"></div>
<div class="a" style="left:215px;top:315px;width:398px;height:400px;background:#fff;border:1px solid #d9d9d9"></div>
<div class="tab" style="left:217px;width:48px">工具</div>
<div class="tab" style="left:264px;width:49px">活动</div>
<div class="tab" style="left:312px;width:50px">活动<span class="dg">1</span></div>
<div class="tab" style="left:361px;width:49px">活动<span class="dg">2</span></div>
<div class="tab" style="left:409px;width:49px">活动<span class="dg">3</span></div>
<div class="tab" style="left:457px;width:61px"><span class="lat">etc</span>修改<span class="dg">1</span></div>
<div class="tab sel" style="left:515px;width:64px"><span class="lat">etc</span>修改<span class="dg">2</span></div>
<div class="a" style="left:223px;top:327px;width:360px;height:380px;background:#ffff00"></div>
<div class="a" style="left:223px;top:333px;width:360px;height:380px;border:1px solid #d5d5dc;border-bottom:none"></div>
<div class="a" style="left:623px;top:295px;width:400px;height:410px;background:#f0f0f0"></div>
<div class="a" style="left:623px;top:315px;width:398px;height:400px;background:#fff;border:1px solid #d9d9d9"></div>
<div class="tab" style="left:625px;width:61px"><span class="lat">etc</span>修改<span class="dg">3</span></div>
<div class="tab" style="left:685px;width:60px"><span class="lat">etc</span>修改<span class="dg">4</span></div>
<div class="tab sel" style="left:743px;width:64px"><span class="lat">etc</span>修改<span class="dg">5</span></div>
<div class="a" style="left:631px;top:327px;width:368px;height:380px;background:#d8d800"></div>
<div class="a" style="left:631px;top:333px;width:368px;height:380px;border:1px solid #d5d5dc;border-bottom:none"></div>
<div class="btn" style="left:232px;top:349px;"><span style="top:13px">行行出状元配置<span class="lat2">/</span>修改</span></div>
<div class="btn" style="left:408px;top:349px;"><span style="top:13px">感恩节配置<span class="lat2">/</span>修改</span></div>
<div class="btn" style="left:232px;top:408px;"><span style="top:13px">生肖挑战配置<span class="lat2">/</span>修改</span></div>
<div class="btn" style="left:408px;top:408px;background:#e5f1fb;border-color:#0078d7;"><span style="top:13px">通天塔配置<span class="lat2">/</span>修改</span></div>
<div class="btn" style="left:232px;top:464px;"><span style="top:13px">万妖窟配置<span class="lat2">/</span>修改</span></div>
<div class="btn" style="left:408px;top:464px;"><span style="top:13px">夜游百鬼配置<span class="lat2">/</span>修改</span></div>
<div class="btn" style="left:232px;top:520px;"><span style="top:13px">王中王配置<span class="lat2">/</span>修改</span></div>
<div class="btn" style="left:408px;top:520px;"><span style="top:13px">万家灯火配置<span class="lat2">/</span>修改</span></div>
<div class="btn" style="left:232px;top:568px;"><span style="top:13px">万圣节配置<span class="lat2">/</span>修改</span></div>
<div class="btn" style="left:408px;top:568px;"><span style="top:13px">万兽峡谷配置<span class="lat2">/</span>修改</span></div>
<div class="btn" style="left:232px;top:616px;"><span style="top:7px">母亲节<span class="lat2">/</span>配置<span class="lat2">/</span>修改</span><span style="top:19px">（温暖母爱）</span></div>
<div class="btn" style="left:408px;top:616px;"><span style="top:7px">父亲节配置<span class="lat2">/</span>修改</span><span style="top:19px">（温馨父爱）</span></div>
<div class="btn" style="left:232px;top:664px;"><span style="top:7px">骏马迎春配置<span class="lat2">/</span>修改</span><span style="top:19px">（五福临门）</span></div>
<div class="btn" style="left:408px;top:664px;"><span style="top:13px">仙羊喝彩配置<span class="lat2">/</span>修改</span></div>
<div class="btn" style="left:640px;top:349px;"><span style="top:8px">打开商城</span></div>
<div class="btn" style="left:816px;top:349px;"><span style="top:13px">打开仙灵卡</span></div>
<div class="btn" style="left:640px;top:400px;"><span style="top:13px">打开周年商城</span></div>
<div class="btn" style="left:816px;top:400px;"><span style="top:13px">打开百度翻译</span></div>
<div class="btn" style="left:640px;top:448px;"><span style="top:13px">各种属性翻译</span></div>
<div class="btn" style="left:816px;top:448px;"><span style="top:13px">如何修改区组名称</span></div>
<div class="btn" style="left:640px;top:496px;"><span style="top:13px"><span class="dg">0</span>文件已翻译一小半出来</span></div>
<div class="a" style="left:929px;top:669px;font:bold 16.5px/20px 'Liberation Sans','Noto Sans CJK SC',sans-serif;color:#0000f4;white-space:nowrap;letter-spacing:0.45px;-webkit-text-stroke:0.45px #0000f4" id="wm">t 1 g m 基地</div>
</body></html>
